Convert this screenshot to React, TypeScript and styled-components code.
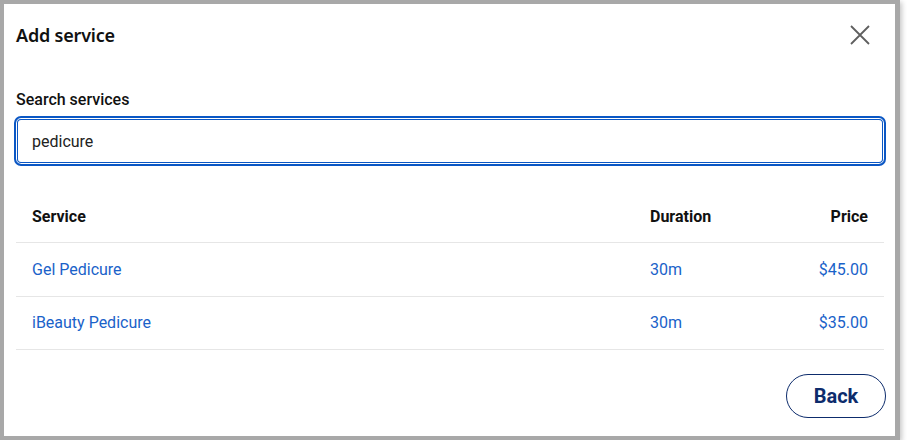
import React from "react";
import styled, { createGlobalStyle } from "styled-components";

const GlobalStyle = createGlobalStyle`
  html, body {
    margin: 0;
    padding: 0;
    background: #ffffff;
  }
  body {
    font-family: Roboto, "Liberation Sans", sans-serif;
    color: #111;
  }
`;

const Modal = styled.div`
  box-sizing: border-box;
  width: 900px;
  height: 440px;
  border: 4px solid #a8a8a8;
  border-right-width: 5px;
  box-shadow: 2px 2px 5px rgba(0, 0, 0, 0.22);
  background: #fff;
  padding: 0 11px 0 12px;
  display: flex;
  flex-direction: column;
`;

const Header = styled.div`
  height: 62px;
  display: flex;
  align-items: center;
  justify-content: space-between;
`;

const Title = styled.h2`
  margin: 0;
  font-family: "Noto Sans", "Open Sans", sans-serif;
  font-size: 18px;
  font-weight: 600;
  color: #111;
  letter-spacing: -0.2px;
`;

const CloseButton = styled.button`
  border: none;
  background: none;
  padding: 0;
  width: 24px;
  height: 24px;
  margin-right: 12px;
  display: flex;
  align-items: center;
  justify-content: center;
  cursor: pointer;
`;

const Label = styled.label`
  display: block;
  margin-top: 24px;
  font-size: 16px;
  line-height: 20px;
  font-weight: 500;
  color: #111;
`;

const SearchInput = styled.input`
  box-sizing: border-box;
  margin: 6px -2px 0;
  height: 50px;
  border: 2px solid #0b57c4;
  border-radius: 7px;
  box-shadow: inset 0 0 0 1px #fff, inset 0 0 0 2px #0b57c4;
  padding: 0 16px;
  font-family: Roboto, "Liberation Sans", sans-serif;
  font-size: 16px;
  color: #222;
  outline: none;
  caret-color: #111;
`;

const Table = styled.div`
  margin-top: 24px;
  display: flex;
  flex-direction: column;
`;

const Row = styled.div<{ $head?: boolean }>`
  display: grid;
  grid-template-columns: 1fr 118px 100px;
  align-items: center;
  height: ${(p) => (p.$head ? "52px" : "52.5px")};
  padding: 0 16px;
  border-bottom: 1px solid #e6e6e6;
  font-size: 16px;
  font-weight: ${(p) => (p.$head ? 700 : 400)};
  color: ${(p) => (p.$head ? "#111" : "#1a62c9")};
`;

const Cell = styled.span<{ $right?: boolean }>`
  text-align: ${(p) => (p.$right ? "right" : "left")};
`;

const Footer = styled.div`
  margin-top: 24px;
  display: flex;
  justify-content: flex-end;
  margin-right: -2px;
`;

const BackButton = styled.button`
  width: 100px;
  height: 44px;
  border: 1px solid #0d2c6c;
  border-radius: 999px;
  background: #fff;
  color: #0d2c6c;
  font-family: Roboto, "Liberation Sans", sans-serif;
  font-size: 20px;
  font-weight: 700;
  cursor: pointer;
`;

const services = [
  { name: "Gel Pedicure", duration: "30m", price: "$45.00" },
  { name: "iBeauty Pedicure", duration: "30m", price: "$35.00" },
];

export default function App() {
  return (
    <>
      <GlobalStyle />
      <Modal>
        <Header>
          <Title>Add service</Title>
          <CloseButton aria-label="Close">
            <svg width="20" height="20" viewBox="0 0 20 20">
              <path d="M1 1 L19 19 M19 1 L1 19" stroke="#5f5f5f" strokeWidth="1.8" fill="none" />
            </svg>
          </CloseButton>
        </Header>
        <Label htmlFor="search">Search services</Label>
        <SearchInput id="search" defaultValue="pedicure" autoFocus />
        <Table>
          <Row $head>
            <Cell>Service</Cell>
            <Cell>Duration</Cell>
            <Cell $right>Price</Cell>
          </Row>
          {services.map((s) => (
            <Row key={s.name}>
              <Cell>{s.name}</Cell>
              <Cell>{s.duration}</Cell>
              <Cell $right>{s.price}</Cell>
            </Row>
          ))}
        </Table>
        <Footer>
          <BackButton>Back</BackButton>
        </Footer>
      </Modal>
    </>
  );
}
